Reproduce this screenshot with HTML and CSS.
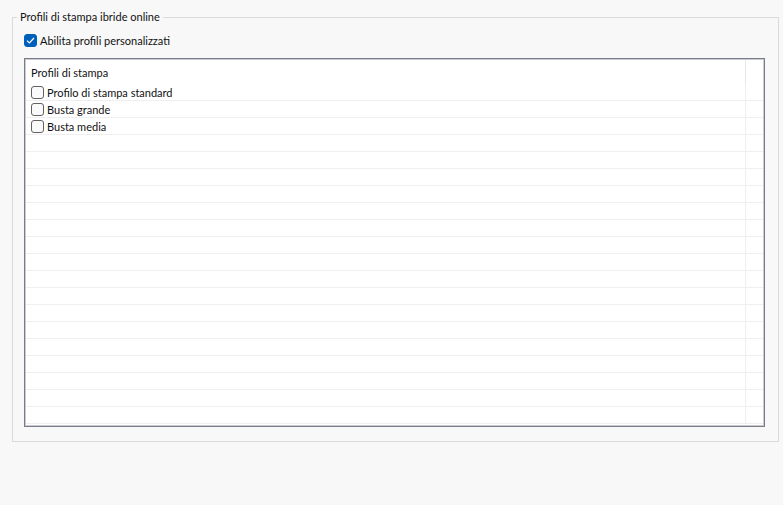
FILE: index.html
```html
<!DOCTYPE html>
<html lang="it">

<head>
  <meta charset="UTF-8">
  <title>Profili di stampa</title>
  <link rel="stylesheet" href="styles.css">
</head>

<body>
  <fieldset class="group">
    <legend>Profili di stampa ibride online</legend>
    <label class="check-row">
      <span class="box checked">
        <svg width="9" height="7" viewBox="0 0 9 7"><path d="M1 3.6 L3.4 6 L8 1" fill="none" stroke="#fff" stroke-width="1.2"/></svg>
      </span>
      Abilita profili personalizzati
    </label>
    <div class="listbox">
      <div class="list-head">
        <div class="col-main">Profili di stampa</div>
        <div class="col-fill"></div>
      </div>
      <div class="list-body" id="rows"></div>
    </div>
  </fieldset>

  <script>
    const items = ['Profilo di stampa standard', 'Busta grande', 'Busta media'];
    const rows = document.getElementById('rows');
    for (let i = 0; i < 20; i++) {
      const row = document.createElement('div');
      row.className = 'list-row';
      const label = items[i];
      row.innerHTML = `
        <div class="col-main">${label ? `<span class="box"></span>${label}` : ''}</div>
        <div class="col-fill"></div>
      `;
      rows.appendChild(row);
    }
  </script>
</body>

</html>
```
FILE: styles.css
```css
* {
  box-sizing: border-box;
}

body {
  margin: 0;
  padding: 0;
  background: #f8f8f8;
  font-family: 'Lato', sans-serif;
  font-size: 11px;
  color: #111;
}

.group {
  margin: 10px 4px 0 12px;
  padding: 9px 13px 14px 11px;
  height: 432px;
  border: 1px solid #dadada;
  border-radius: 0;
}

.group legend {
  padding: 0 3px;
  margin-left: -7px;
  line-height: 14px;
}

.check-row {
  display: flex;
  align-items: center;
  gap: 3px;
  height: 14px;
  margin-bottom: 11px;
}

.box {
  width: 13px;
  height: 13px;
  border: 1px solid #616161;
  border-radius: 3px;
  background: #fafafa;
  display: inline-flex;
  align-items: center;
  justify-content: center;
  flex-shrink: 0;
}

.box.checked {
  background: #005fb8;
  border-color: #005fb8;
}

.listbox {
  height: 369px;
  border: 1px solid #7a7d88;
  box-shadow: inset 0 0 0 1px #c9cbd1;
  background: #fff;
  padding: 1px;
  overflow: hidden;
}

.list-head,
.list-row {
  display: flex;
}

.list-head {
  height: 24px;
  align-items: center;
}

.list-head .col-main {
  padding-left: 5px;
  height: 100%;
  display: flex;
  align-items: center;
  border-right: 1px solid #e8e8e8;
}

.list-row {
  height: 17px;
  border-bottom: 1px solid #efefef;
}

.col-main {
  width: 720px;
  display: flex;
  align-items: center;
  gap: 3px;
  padding-left: 5px;
}

.list-row .col-main {
  border-right: 1px solid #efefef;
}

.col-fill {
  flex: 1;
}
```
